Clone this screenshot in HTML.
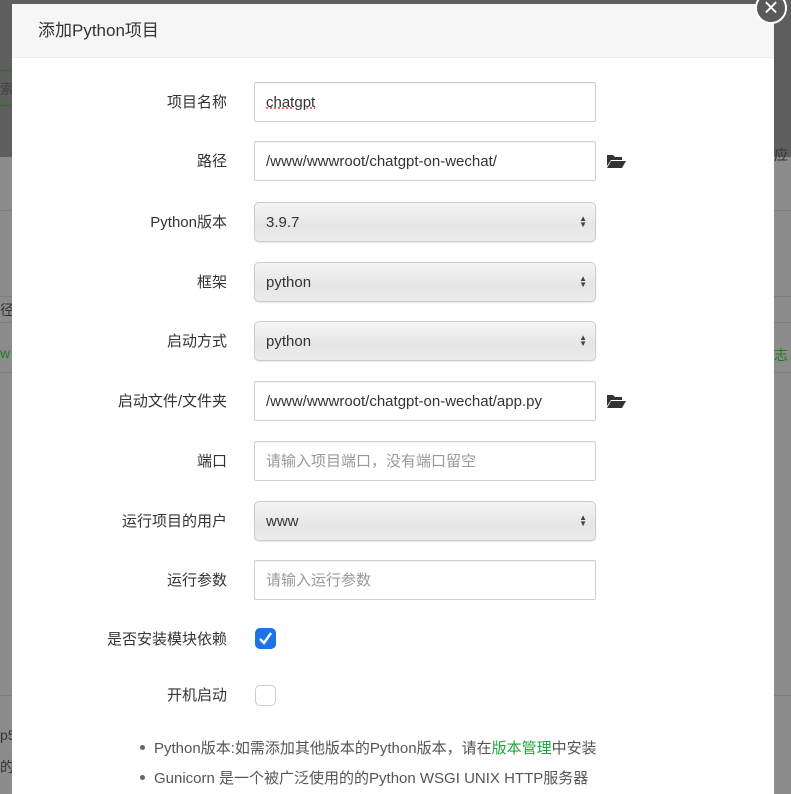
<!DOCTYPE html>
<html><head><meta charset="utf-8"><style>
*{box-sizing:border-box;margin:0;padding:0}
body{width:791px;height:786px;overflow:hidden;position:relative;background:#8c8c8c;font-family:"Liberation Sans","Noto Sans CJK SC",sans-serif}
.topbg{position:absolute;left:0;top:0;width:791px;height:157px;background:#5e5e5e}
.bgline{position:absolute;left:0;width:791px;height:1px;background:#7d7d7d}
.modal{position:absolute;left:12px;top:4px;width:762px;height:790px;background:#fff}
.hd{height:54px;background:#f6f6f6;border-bottom:1px solid #ececec;font-size:17px;color:#333;padding-left:26px;line-height:54px}
.row{position:absolute;left:0;width:760px;height:40px}
.lbl{position:absolute;right:545px;top:1px;line-height:40px;font-size:15px;color:#333;white-space:nowrap}
.inp{position:absolute;left:242px;top:0;width:342px;height:40px;border:1px solid #d0d0d0;border-radius:2px;font-size:15px;color:#333;line-height:40px;padding-left:11px;background:#fff;box-shadow:inset 0 1px 1px rgba(0,0,0,.05)}
.ph{color:#999}
.sel{background:linear-gradient(#f4f4f4,#e6e6e6 60%,#ececec);border:1px solid #ccc;border-radius:5px;box-shadow:0 1px 1px rgba(0,0,0,.1)}
.arr{position:absolute;right:8px;top:13px;font-size:8px;line-height:6px;color:#444}
.fold{position:absolute;left:594px;top:12px}
.cb{position:absolute;left:243px;width:21px;height:21px;border-radius:5px}
.note{position:absolute;left:142px;font-size:15px;color:#555}
.note:before{content:"";position:absolute;left:-14px;top:8px;width:5px;height:5px;border-radius:50%;background:#666}
.close{position:absolute;left:755px;top:-8px;width:32px;height:32px;border-radius:50%;background:#5a5a5a;border:2px solid #fff;color:#fff;text-align:center;line-height:26px;font-size:26px}
</style></head><body>
<div class="topbg"></div>
<div style="position:absolute;left:0;top:70px;width:20px;height:36px;border-top:1px solid #2c6e2c;border-bottom:1px solid #2c6e2c;color:#444;font-size:14px;line-height:36px">索</div>
<div class="bgline" style="top:210px"></div>
<div class="bgline" style="top:296px"></div>
<div class="bgline" style="top:322px"></div>
<div class="bgline" style="top:372px"></div>
<div class="bgline" style="top:695px"></div>
<div style="position:absolute;left:0;top:300px;font-size:14px;color:#333">径</div>
<div style="position:absolute;left:0;top:345px;font-size:14px;color:#1e7e1e">w</div>
<div style="position:absolute;left:0;top:727px;font-size:14px;color:#333">p5</div>
<div style="position:absolute;left:0;top:757px;font-size:14px;color:#333">的</div>
<div style="position:absolute;left:774px;top:145px;font-size:14px;color:#333">应</div>
<div style="position:absolute;left:774px;top:345px;font-size:14px;color:#1e7e1e">志</div>
<div class="modal">
<div class="hd">添加Python项目</div>
<div class="row" style="top:78px"><div class="lbl">项目名称</div><div class="inp"><span style="text-decoration:underline dotted #e33">chatgpt</span></div></div>
<div class="row" style="top:137px"><div class="lbl">路径</div><div class="inp">/www/wwwroot/chatgpt-on-wechat/</div>
<svg class="fold" width="20" height="16" viewBox="0 0 20 16"><path d="M1 2h6l2 2h7v3H5L1 13z" fill="#333"/><path d="M5 8h15l-4 7H1z" fill="#333"/></svg></div>
<div class="row" style="top:198px"><div class="lbl">Python版本</div><div class="inp sel">3.9.7<div class="arr">▲<br>▼</div></div></div>
<div class="row" style="top:258px"><div class="lbl">框架</div><div class="inp sel">python<div class="arr">▲<br>▼</div></div></div>
<div class="row" style="top:317px"><div class="lbl">启动方式</div><div class="inp sel">python<div class="arr">▲<br>▼</div></div></div>
<div class="row" style="top:377px"><div class="lbl">启动文件/文件夹</div><div class="inp">/www/wwwroot/chatgpt-on-wechat/app.py</div>
<svg class="fold" width="20" height="16" viewBox="0 0 20 16"><path d="M1 2h6l2 2h7v3H5L1 13z" fill="#333"/><path d="M5 8h15l-4 7H1z" fill="#333"/></svg></div>
<div class="row" style="top:437px"><div class="lbl">端口</div><div class="inp ph">请输入项目端口，没有端口留空</div></div>
<div class="row" style="top:497px"><div class="lbl">运行项目的用户</div><div class="inp sel">www<div class="arr">▲<br>▼</div></div></div>
<div class="row" style="top:556px"><div class="lbl">运行参数</div><div class="inp ph">请输入运行参数</div></div>
<div class="row" style="top:615px"><div class="lbl">是否安装模块依赖</div></div>
<div class="cb" style="top:624px;background:#1a73e8"><svg width="21" height="21" viewBox="0 0 21 21"><path d="M5 11l4 4 7-10" stroke="#fff" stroke-width="2.5" fill="none"/></svg></div>
<div class="row" style="top:671px"><div class="lbl">开机启动</div></div>
<div class="cb" style="top:681px;border:1px solid #ccc;background:#fff"></div>
<div class="note" style="top:733px">Python版本:如需添加其他版本的Python版本，请在<span style="color:#20a53a">版本管理</span>中安装</div>
<div class="note" style="top:763px">Gunicorn 是一个被广泛使用的的Python WSGI UNIX HTTP服务器</div>
</div>
<div class="close">×</div>
</body></html>
